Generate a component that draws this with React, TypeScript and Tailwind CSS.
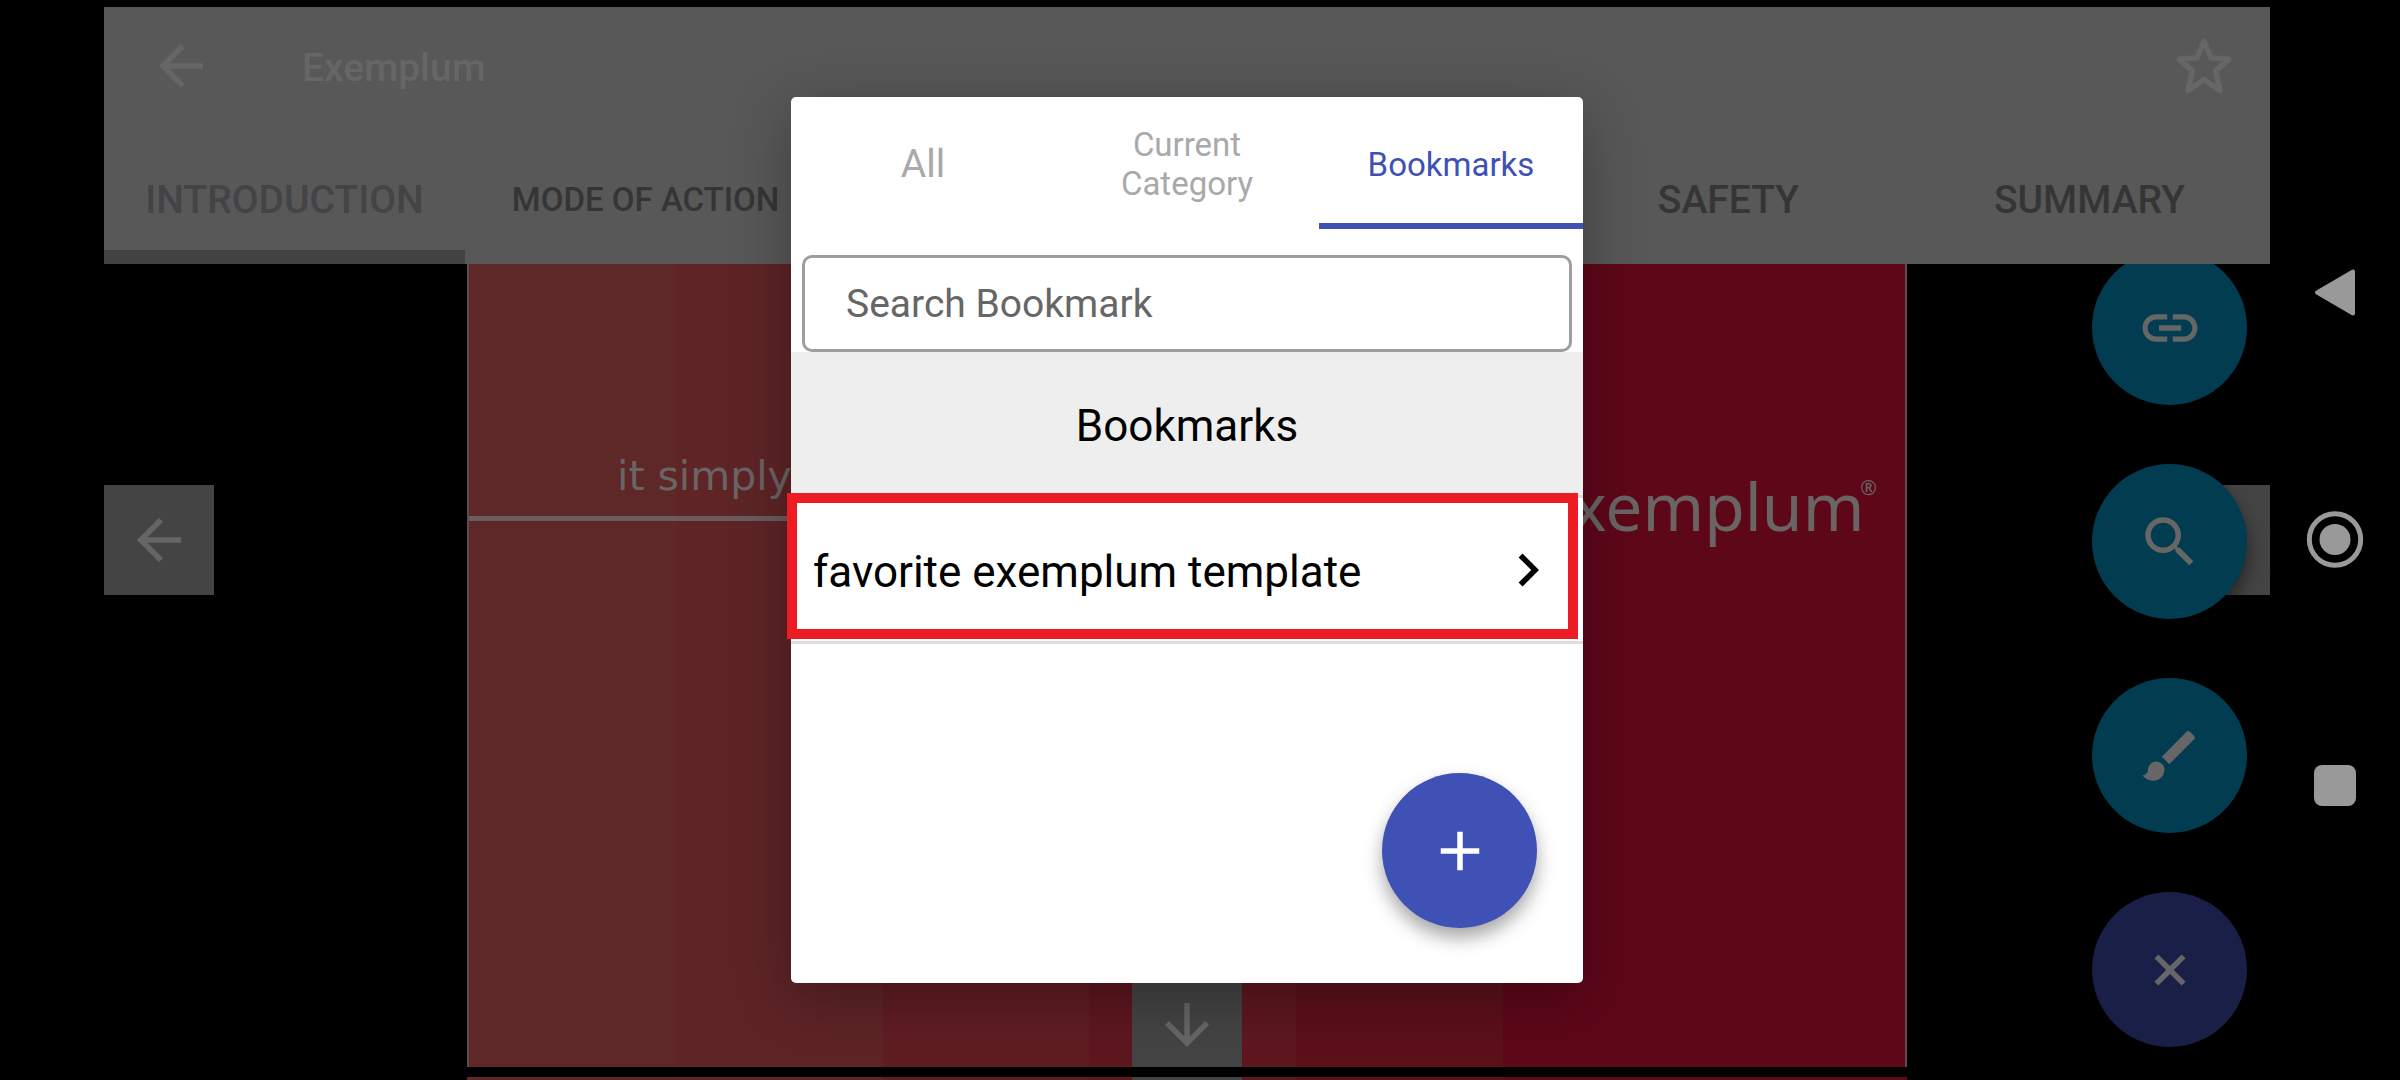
import type { ReactNode } from "react"
import { MdAdd, MdArrowBack, MdArrowDownward, MdBrush, MdChevronRight, MdLink, MdSearch } from "react-icons/md"

const bands = [
  "bg-[#5e2829]",
  "bg-[#5e2426]",
  "bg-[#5f1d22]",
  "bg-[#5e171f]",
  "bg-[#5c101a]",
  "bg-[#5e0719]",
]

const chapters = [
  { label: "INTRODUCTION", style: "text-[39px] text-[#424446] border-[#414244]" },
  { label: "MODE OF ACTION", style: "text-[33px] text-[#353535] border-transparent" },
  { label: "SAFETY", style: "text-[39px] text-[#353535] border-transparent col-start-5" },
  { label: "SUMMARY", style: "text-[39px] text-[#353535] border-transparent" },
]

const filters = [
  { label: "All", style: "text-[39px] text-[#a9a9a9] border-transparent" },
  { label: "Current Category", style: "text-[33px] text-[#a9a9a9] border-transparent" },
  { label: "Bookmarks", style: "text-[33px] text-[#3f51b5] border-[#3f51b5]" },
]

function Fab({ label, color, children }: { label: string; color: string; children: ReactNode }) {
  return (
    <button
      aria-label={label}
      className={`flex size-[155px] shrink-0 items-center justify-center rounded-full text-[66px] ${color}`}
    >
      {children}
    </button>
  )
}

function Bands() {
  return (
    <div className="absolute inset-0 grid grid-cols-[repeat(5,1fr)_28%]">
      {bands.map((band) => (
        <div key={band} className={band} />
      ))}
    </div>
  )
}

function Header() {
  return (
    <header className="relative z-20 mt-[7px] bg-[#585858]">
      <div className="flex h-[118px] items-center pr-[33px] pl-11 text-[66px] text-[#666]">
        <button aria-label="Back">
          <MdArrowBack />
        </button>
        <h1 className="ml-[88px] flex-1 pt-[4px] text-[39px] font-medium">Exemplum</h1>
        <button aria-label="Add to favorites">
          <svg viewBox="0 0 24 24" className="size-[66px]" fill="none" stroke="currentColor" strokeWidth="2" strokeLinejoin="round">
            <path d="M12 3L14.5 9L21 9.5L16.2 13.8L17.8 21L12 16.9L6.2 21L7.8 13.8L3 9.5L9.5 9Z" />
          </svg>
        </button>
      </div>
      <nav className="mt-[7px] grid h-[132px] grid-cols-6">
        {chapters.map((c) => (
          <button key={c.label} className={`border-b-[14px] pt-[18px] font-medium whitespace-nowrap ${c.style}`}>
            {c.label}
          </button>
        ))}
      </nav>
    </header>
  )
}

function Slides() {
  return (
    <div className="flex min-h-0 flex-1 flex-col px-[363px]">
      <section className="relative flex flex-1 items-start justify-between border-x-2 border-[#604a4b] text-[#6a6465]">
        <Bands />
        <div className="relative mt-[182px] w-1/2">
          <p className="pl-[148px] font-['DejaVu_Sans',sans-serif] text-[41px] leading-[60px]">it simply</p>
          <div className="mt-[10px] h-[5px] bg-[#6b5c5d]" />
        </div>
        <p className="relative mt-[196px] mr-7 flex font-['Noto_Sans',sans-serif] text-[66px] leading-[90px]">
          exemplum<span className="-ml-1 pt-4 text-[20px] leading-6">®</span>
        </p>
      </section>
      <div className="relative z-10 h-[10px] bg-black" />
      <section className="relative h-[3px]">
        <Bands />
      </section>
    </div>
  )
}

function BookmarkDialog() {
  return (
    <div
      role="dialog"
      aria-label="Bookmarks"
      className="relative flex h-[886px] w-[792px] flex-col rounded-[5px] bg-white text-black shadow-[0_16px_60px_rgba(0,0,0,0.3)]"
    >
      <div className="grid h-[132px] grid-cols-3">
        {filters.map((f) => (
          <button key={f.label} className={`border-b-[6px] px-8 pt-[8px] leading-[39px] ${f.style}`}>
            {f.label}
          </button>
        ))}
      </div>
      <input
        type="text"
        aria-label="Search Bookmark"
        placeholder="Search Bookmark"
        className="mx-[11px] mt-[26px] h-[97px] rounded-[10px] border-[3px] border-[#9e9e9e] bg-white px-[41px] text-[39px] placeholder:text-[#666]"
      />
      <h2 className="flex h-[143px] items-center justify-center bg-[#eee] pt-[4px] text-[44px]">Bookmarks</h2>
      <div className="relative border-y-[3px] border-[#ddd]">
        <button className="flex h-[143px] w-full items-center justify-between px-[22px] text-[44px]">
          <span className="pt-[4px]">favorite exemplum template</span>
          <MdChevronRight className="text-[66px]" />
        </button>
        <div className="pointer-events-none absolute -top-[5px] right-[5px] bottom-[2px] -left-1 border-[10px] border-[#ed1c24]" />
      </div>
      <div className="absolute right-[46px] bottom-[55px]">
        <Fab label="Add bookmark" color="bg-[#3f51b5] text-white shadow-[0_10px_18px_rgba(0,0,0,0.35)]">
          <MdAdd />
        </Fab>
      </div>
    </div>
  )
}

function SystemNav() {
  return (
    <nav className="flex w-[130px] flex-col items-center justify-center gap-[181px] text-[#999]">
      <button aria-label="System back">
        <svg viewBox="0 0 66 66" className="size-[66px]" fill="currentColor" stroke="currentColor" strokeWidth="4" strokeLinejoin="round">
          <path d="M15 32.5L51 11.5V53.5z" />
        </svg>
      </button>
      <button aria-label="Home">
        <svg viewBox="0 0 66 66" className="size-[66px]" fill="currentColor">
          <circle cx="33" cy="32.5" r="25.7" fill="none" stroke="currentColor" strokeWidth="5" />
          <circle cx="33" cy="32.5" r="15.5" />
        </svg>
      </button>
      <button aria-label="Recent apps">
        <svg viewBox="0 0 66 66" className="size-[66px]" fill="currentColor">
          <rect x="12" y="11" width="42" height="41" rx="8" />
        </svg>
      </button>
    </nav>
  )
}

export default function App() {
  return (
    <div className="flex h-screen overflow-hidden bg-black pl-[104px] font-[Roboto,sans-serif]">
      <main className="relative flex flex-1 flex-col">
        <Header />
        <Slides />

        <div className="absolute inset-0 flex items-center justify-between text-[66px] text-[#666]">
          <button aria-label="Previous slide" className="flex size-[110px] items-center justify-center bg-[#444]">
            <MdArrowBack />
          </button>
          <button aria-label="Next slide" className="flex size-[110px] items-center justify-center bg-[#444]">
            <MdArrowBack className="rotate-180" />
          </button>
        </div>
        <div className="absolute inset-x-0 bottom-0 flex justify-center text-[66px] text-[#666]">
          <button aria-label="Slide below" className="flex size-[110px] items-center justify-center bg-[#444]">
            <MdArrowDownward />
          </button>
        </div>

        <div className="absolute right-[23px] bottom-[33px] z-10 flex flex-col gap-[59px]">
          <Fab label="Links" color="bg-[#013c50] text-[#666]">
            <MdLink />
          </Fab>
          <Fab label="Search" color="bg-[#013c50] text-[#666] shadow-[0_10px_18px_rgba(0,0,0,0.5)]">
            <MdSearch />
          </Fab>
          <Fab label="Draw" color="bg-[#013c50] text-[#666]">
            <MdBrush />
          </Fab>
          <Fab label="Close menu" color="bg-[#191f47] text-[#666]">
            <MdAdd className="rotate-45" />
          </Fab>
        </div>

        <div className="absolute inset-0 z-30 flex items-center justify-center">
          <BookmarkDialog />
        </div>
      </main>
      <SystemNav />
    </div>
  )
}
